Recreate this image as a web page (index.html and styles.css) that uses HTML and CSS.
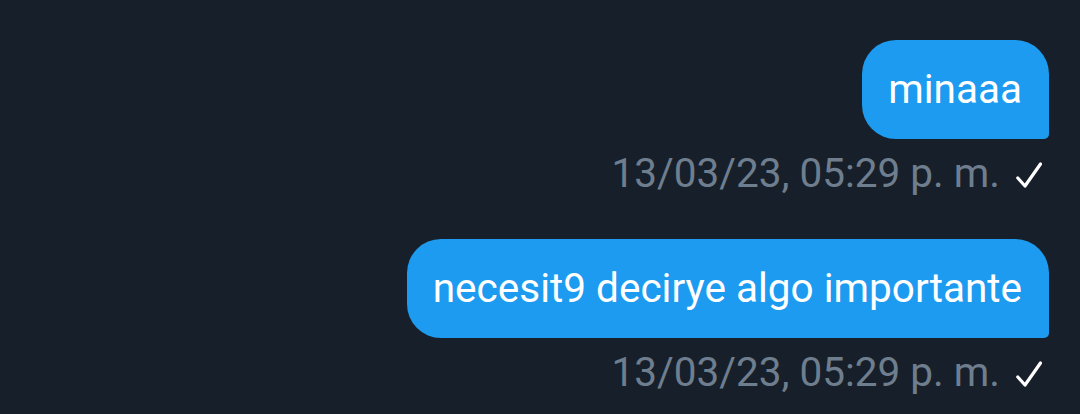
FILE: index.html
```html
<!DOCTYPE html>
<html lang="es">
<head>
<meta charset="utf-8">
<link rel="stylesheet" href="styles.css">
</head>
<body>
<div class="chat">
  <div class="msg">
    <div class="bubble">minaaa</div>
    <div class="meta">
      <span class="time">13/03/23, 05:29 p. m.</span>
      <svg class="check" viewBox="0 0 26 26" width="26" height="26"><path d="M1.8 16 L9 24 L24.5 2" fill="none" stroke="#fff" stroke-width="3.2" stroke-linecap="round" stroke-linejoin="round"/></svg>
    </div>
  </div>
  <div class="msg">
    <div class="bubble">necesit9 decirye algo importante</div>
    <div class="meta">
      <span class="time">13/03/23, 05:29 p. m.</span>
      <svg class="check" viewBox="0 0 26 26" width="26" height="26"><path d="M1.8 16 L9 24 L24.5 2" fill="none" stroke="#fff" stroke-width="3.2" stroke-linecap="round" stroke-linejoin="round"/></svg>
    </div>
  </div>
</div>
</body>
</html>
```

FILE: styles.css
```css
html, body {
  margin: 0;
  padding: 0;
  background: #17202a;
  height: 100%;
  overflow: hidden;
}
.chat {
  display: flex;
  flex-direction: column;
  align-items: flex-end;
  padding: 40px 31px 0 0;
  font-family: Roboto, "Noto Sans", sans-serif;
}
.msg {
  display: flex;
  flex-direction: column;
  align-items: flex-end;
  margin-bottom: 18px;
}
.msg:last-child {
  margin-bottom: 0;
}
.bubble {
  background: #1d9bf0;
  color: #fff;
  font-size: 40.5px;
  line-height: 99px;
  height: 99px;
  padding: 0 27px 0 26px;
  border-radius: 34px 34px 5px 34px;
}
.meta {
  display: flex;
  align-items: flex-start;
  height: 82px;
  box-sizing: border-box;
  padding-top: 10px;
  gap: 16px;
}
.msg:last-child .meta {
  height: 70px;
}
.time {
  color: #6f7e8e;
  font-size: 40.5px;
}
.check {
  margin-right: 7px;
  margin-top: 13px;
}
```
